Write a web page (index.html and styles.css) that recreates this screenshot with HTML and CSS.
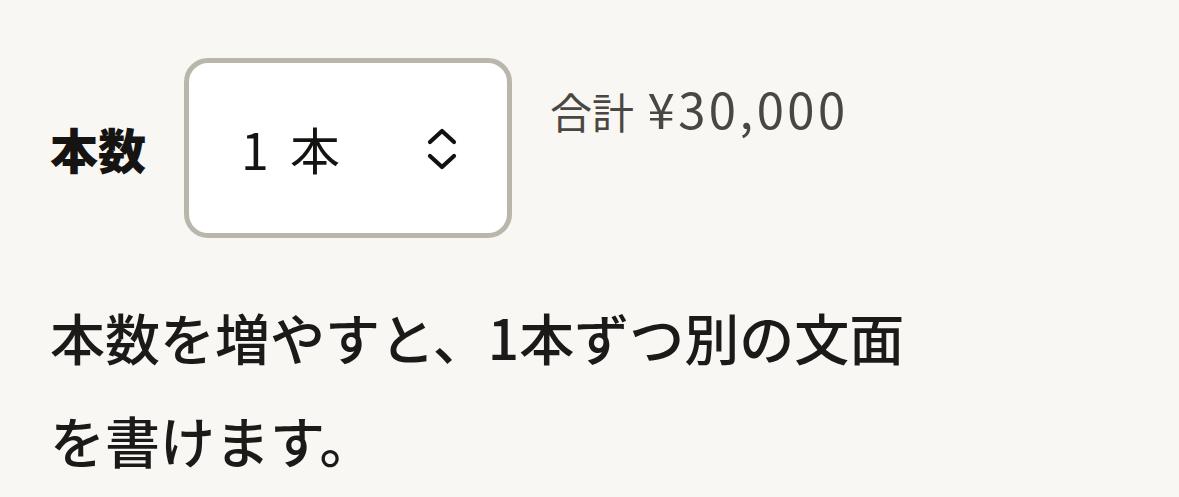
FILE: index.html
```html
<!DOCTYPE html>
<html lang="ja">
  <head>
    <meta charset="utf-8">
    <title>本数</title>
    <link rel="stylesheet" href="styles.css">
  </head>
  <body>
    <div class="page">
      <div class="qty-row">
        <label class="qty-label" for="qty">本数</label>
        <div class="select-box">
          <span class="select-value" id="qty">1 本</span>
          <svg class="select-icon" width="30" height="42" viewBox="0 0 30 42">
            <path d="M3 14 L15 3 L27 14" fill="none" stroke="#111" stroke-width="4.2" stroke-linecap="round" stroke-linejoin="round"/>
            <path d="M3 28 L15 39 L27 28" fill="none" stroke="#111" stroke-width="4.2" stroke-linecap="round" stroke-linejoin="round"/>
          </svg>
        </div>
        <div class="total">合計 <span class="total-amount">¥30,000</span></div>
      </div>

      <p class="note">本数を増やすと、1本ずつ別の文面を書けます。</p>
    </div>
  </body>
</html>
```

FILE: styles.css
```css
body {
  margin: 0;
  background-color: #f8f7f4;
  font-family: "Noto Sans CJK JP", "Noto Sans", sans-serif;
  color: #1b1a18;
}

.page {
  padding: 58px 50px 0 50px;
}

.qty-row {
  display: flex;
  align-items: flex-start;
  gap: 38px;
}

.qty-label {
  align-self: center;
  font-size: 48px;
  font-weight: 900;
  line-height: 1;
  color: #151412;
}

.select-box {
  box-sizing: border-box;
  width: 328px;
  height: 180px;
  display: flex;
  align-items: center;
  justify-content: space-between;
  padding: 0 50px 0 52px;
  background: #ffffff;
  border: 5px solid #bbb6ab;
  border-radius: 24px;
}

.select-value {
  font-size: 50px;
  line-height: 1;
  word-spacing: 10px;
  color: #151412;
}

.select-icon {
  display: block;
  margin-top: 2px;
}

.total {
  margin-top: 21px;
  font-size: 42px;
  line-height: 1.2;
  color: #4a4641;
}

.total-amount {
  margin-left: 4px;
  font-size: 49px;
  letter-spacing: 3.5px;
}

.note {
  margin: 47px 0 0 0;
  max-width: 880px;
  font-size: 55px;
  font-weight: 500;
  line-height: 103px;
  color: #1b1a18;
}
```
